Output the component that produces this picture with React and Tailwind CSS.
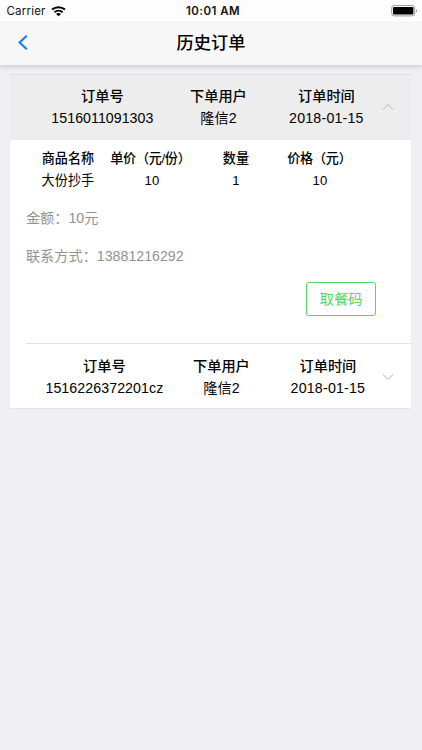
import React from "react";

function StatusBar() {
  return (
    <div className="relative z-10 grid h-[21px] grid-cols-3 items-center bg-[#fdfdfd] pl-[6.5px] pr-[4px] font-['Inter','Liberation_Sans',sans-serif] text-[11.5px] leading-[21px] text-[#111]">
      <div className="flex items-center gap-[5px]">
        <span className="pt-[1px] tracking-[0.2px]">Carrier</span>
        <svg width="15" height="11" viewBox="0 0 15 11" fill="none" stroke="#000" strokeWidth="2">
          <path d="M1 3.6C4.7 .4 10.3 .4 14 3.6" />
          <path d="M3.4 6.2C5.7 4.2 9.3 4.2 11.6 6.2" />
          <path d="M7.5 10.3L5 7.9C6.4 6.7 8.6 6.7 10 7.9Z" fill="#000" stroke="none" />
        </svg>
      </div>
      <span className="whitespace-nowrap pl-[1.5px] pt-[1px] text-center font-semibold tracking-[0.45px]">10:01 AM</span>
      <svg className="justify-self-end" width="27" height="12" viewBox="0 0 27 12">
        <rect x=".7" y=".5" width="23" height="10.4" rx="2.6" fill="none" stroke="#999" />
        <rect x="2" y="1.9" width="20.4" height="7.6" rx="1.3" fill="#000" />
        <path d="M25 4C26.4 4.6 26.4 6.8 25 7.4Z" fill="#999" />
      </svg>
    </div>
  );
}

function Chevron({ up }) {
  return (
    <svg width="12" height="8" viewBox="0 0 12 8" fill="none" stroke="#b4b4b8" strokeWidth="1">
      <path d={up ? "M.8 6.8L6 1.5L11.2 6.8" : "M.8 1.2L6 6.5L11.2 1.2"} />
    </svg>
  );
}

function Field({ label, value, className, valueClass = "tracking-[0.04px]" }) {
  return (
    <div className={"flex flex-col items-center whitespace-nowrap " + className}>
      <span className="font-medium">{label}</span>
      <span className={valueClass}>{value}</span>
    </div>
  );
}

const columns = [
  ["商品名称", "大份抄手", ""],
  ["单价（元/份）", "10", "-ml-[3px] tracking-[-0.3px]"],
  ["数量", "1", ""],
  ["价格（元）", "10", "-ml-[1px] tracking-[-0.2px]"],
];

export default function App() {
  return (
    <div className="h-[750px] w-full overflow-hidden bg-[#efeff4] font-['Liberation_Sans','Noto_Sans_CJK_SC',sans-serif] text-[14.2px] leading-[22px] text-black">
      <StatusBar />
      <header className="grid h-[44px] grid-cols-[1fr_auto_1fr] items-center bg-[#f7f7f7] pl-[17px] pr-[17px] shadow-[0_1px_6px_rgba(0,0,0,0.2)]">
        <svg width="12" height="16" viewBox="0 0 12 16" fill="none" stroke="#1a7cec" strokeWidth="2.1">
          <path d="M9.8 .7L2.6 7.5L9.8 14.3" />
        </svg>
        <h1 className="text-[17.2px] font-medium leading-[26px]">历史订单</h1>
      </header>

      <main className="ml-[10.4px] mr-[10.6px] mt-[9px] border-b border-[#e3e3e7] bg-white">
        <section>
          <div className="flex h-[66px] items-center border-t border-[#dddde2] bg-[#ededed] pb-[2px] pl-[32px] pr-[17.4px]">
            <Field label="订单号" value="1516011091303" className="w-[120px]" />
            <Field label="下单用户" value="隆信2" className="w-[112px]" />
            <Field label="订单时间" value="2018-01-15" className="w-[104px]" valueClass="tracking-[0.2px]" />
            <div className="ml-auto"><Chevron up /></div>
          </div>

          <div className="flex h-[203px] flex-col px-[15.5px] pt-[8px]">
            <div className="grid w-[336px] grid-cols-4 text-[13.1px] leading-[21.5px]">
              {columns.map(([label, value, labelClass]) => (
                <div key={label} className="flex flex-col items-center whitespace-nowrap">
                  <span className={"font-medium " + labelClass}>{label}</span>
                  <span className="tracking-[0.1px]">{value}</span>
                </div>
              ))}
            </div>
            <p className="mt-[16px] text-[#929292]">金额：10元</p>
            <p className="mt-[16px] text-[#929292]">联系方式：13881216292</p>
            <button className="mr-[20px] mt-[15px] h-[34px] w-[69.5px] self-end rounded-[3px] border border-[#4cd964] text-[14.2px] leading-[32px] text-[#4cd964]">
              取餐码
            </button>
          </div>
        </section>

        <section className="pl-[15.5px]">
          <div className="flex h-[65px] items-center border-t border-[#e1e1e3] pl-[16.5px] pr-[17.4px] pt-[2px]">
            <Field label="订单号" value="1516226372201cz" className="w-[124px]" valueClass="tracking-[0.08px]" />
            <Field label="下单用户" value="隆信2" className="w-[110px]" />
            <Field label="订单时间" value="2018-01-15" className="w-[103px]" valueClass="tracking-[0.2px]" />
            <div className="ml-auto"><Chevron /></div>
          </div>
        </section>
      </main>
    </div>
  );
}
